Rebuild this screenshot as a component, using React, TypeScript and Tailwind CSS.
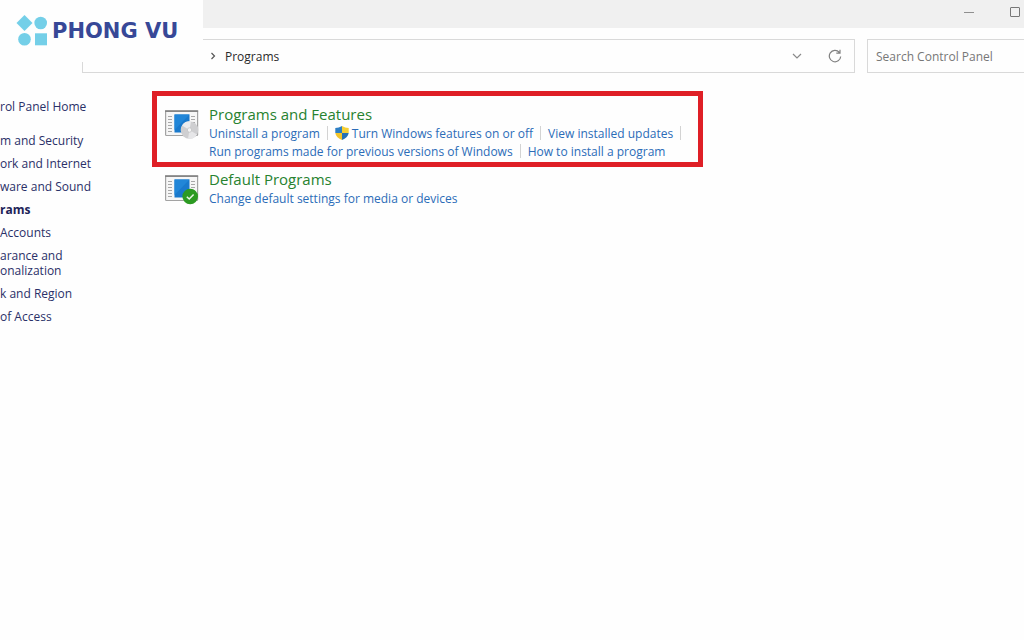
import React from 'react';

interface NavItem {
  label: string;
  active?: boolean;
}

const NAV_ITEMS: NavItem[] = [
  { label: 'm and Security' },
  { label: 'ork and Internet' },
  { label: 'ware and Sound' },
  { label: 'rams', active: true },
  { label: 'Accounts' },
  { label: 'arance and onalization' },
  { label: 'k and Region' },
  { label: 'of Access' },
];

const Logo: React.FC = () => (
  <div className="absolute left-0 top-0 z-10 flex h-[62px] w-[203px] items-center gap-1 bg-[#fefefe] pl-4">
    <svg viewBox="0 0 32 32" className="h-8 w-8 shrink-0" fill="#74cfe8">
      <path d="M8.500 0L16.500 8L8.500 16L.5 8Z" />
      <circle cx="24.700" cy="8" r="6.300" />
      <circle cx="8.500" cy="24.200" r="6.300" />
      <rect x="19" y="18.300" width="12" height="12" />
    </svg>
    <span className="whitespace-nowrap font-['DejaVu_Sans'] text-[21px] font-bold leading-none text-[#374897]">
      PHONG VU
    </span>
  </div>
);

const WindowIcon: React.FC<{ children: React.ReactNode }> = ({ children }) => (
  <svg viewBox="0 0 34 30" className="h-[30px] w-[34px] shrink-0">
    <rect x="0.600" y="1" width="32" height="24.500" rx="0.800" fill="#f6f6f6" stroke="#a3a3a3" strokeWidth="1.200" />
    <path d="M0 1.200H33.200" stroke="#858585" strokeWidth="1.800" />
    <path d="M3 6.500h4M3 9.500h4M3 12.500h4M3 15.500h4M3 18.500h4M3 21.500h4M26 6.500h4M26 9.500h4M26 12.500h4M26 15.500h4M26 18.500h4M26 21.500h4" stroke="#a8a8a8" strokeWidth="1.200" />
    <rect x="9.500" y="4.500" width="15" height="18" fill="#1979cc" />
    <path d="M9.500 4.500H24.500L9.500 20Z" fill="#2186d8" />
    {children}
  </svg>
);

const DiscBadge: React.FC = () => (
  <>
    <circle cx="24.500" cy="20" r="8.800" fill="#cfcfd1" />
    <path d="M24.500 20L17 15.400A8.800 8.800 0 0 1 26 11.300Z" fill="#ececee" />
    <path d="M24.500 20L32 24.600A8.800 8.800 0 0 1 23 28.700Z" fill="#e6e6e8" />
    <circle cx="24.500" cy="20" r="2.200" fill="#f4f4f4" stroke="#b9b9bb" strokeWidth="0.600" />
  </>
);

const CheckBadge: React.FC = () => (
  <>
    <circle cx="25.200" cy="21.500" r="7.800" fill="#2c9a22" />
    <path d="M21.800 21.800L24.200 24L28.600 19.400" fill="none" stroke="#e9f7e4" strokeWidth="1.500" />
  </>
);

const ShieldIcon: React.FC = () => (
  <svg viewBox="0 0 14 14" className="h-[14px] w-[14px] shrink-0">
    <path d="M7 0C5 1.300 2.700 1.900.3 2V7H7Z" fill="#2e7fc4" />
    <path d="M7 0C9 1.300 11.300 1.900 13.700 2V7H7Z" fill="#f6cf33" />
    <path d="M.3 7C.8 10.200 3.400 12.500 7 14V7Z" fill="#f2c42a" />
    <path d="M13.700 7C13.200 10.200 10.600 12.500 7 14V7Z" fill="#2671b5" />
  </svg>
);

const Divider: React.FC = () => <span className="mx-[7px] h-[14px] w-px bg-[#d3d3d3]" />;

const TaskLink: React.FC<{ children: React.ReactNode }> = ({ children }) => (
  <a href="#" className="flex items-center gap-[3px] whitespace-nowrap text-[#2b6cb8] hover:underline">
    {children}
  </a>
);

interface CategoryProps {
  title: string;
  badge: React.ReactNode;
  highlighted?: boolean;
  children: React.ReactNode;
}

const Category: React.FC<CategoryProps> = ({ title, badge, highlighted, children }) => (
  <section
    className={`flex max-w-[551px] gap-[10px] border-x-[5px] px-2 ${
      highlighted ? 'border-y-[5px] border-[#df1f26] pb-0.5 pt-2' : 'border-transparent pt-0.5'
    }`}
  >
    <div className="pt-1.5">
      <WindowIcon>{badge}</WindowIcon>
    </div>
    <div>
      <h2 className="text-[15px] leading-5 text-[#27822f]">
        <a href="#">{title}</a>
      </h2>
      {children}
    </div>
  </section>
);

const App: React.FC = () => {
  return (
    <div className="relative min-h-screen bg-[#fefefe] font-['Open_Sans',sans-serif] text-xs leading-[15px] text-[#333]">
      <Logo />

      {/* Title bar */}
      <header className="flex h-7 justify-end gap-9 bg-[#f0f0f0] pr-1">
        <button aria-label="Minimize" className="h-6 w-[10px]">
          <svg viewBox="0 0 10 10" className="h-[10px] w-[10px]" stroke="#8f8f8f">
            <path d="M0 5.500H10" />
          </svg>
        </button>
        <button aria-label="Maximize" className="h-6 w-[10px]">
          <svg viewBox="0 0 10 10" className="h-[10px] w-[10px]" fill="none" stroke="#777">
            <rect x="0.500" y="0.500" width="9" height="9" rx="0.500" />
          </svg>
        </button>
      </header>

      {/* Address bar and search */}
      <div className="mt-[11px] flex gap-3 pl-[82px]">
        <div className="flex h-[34px] flex-1 items-center border border-[#d9d9d9] pl-[126px] pr-3">
          <svg viewBox="0 0 8 8" className="h-2 w-2" fill="none" stroke="#555" strokeWidth="1.200">
            <path d="M2.500 1L5.500 4L2.500 7" />
          </svg>
          <span className="ml-2 text-[#2b2b2b]">Programs</span>
          <button aria-label="Previous locations" className="ml-auto">
            <svg viewBox="0 0 10 10" className="h-[10px] w-[10px]" fill="none" stroke="#8a8a8a" strokeWidth="1.200">
              <path d="M1 3L5 7L9 3" />
            </svg>
          </button>
          <button aria-label="Refresh" className="ml-[26px]">
            <svg viewBox="0 0 14 14" className="h-[14px] w-[14px]" fill="none" stroke="#808080" strokeWidth="1.200">
              <path d="M11.300 3.300A5.700 5.700 0 1 0 12.700 7.500M8.300 4.200H12V.8" />
            </svg>
          </button>
        </div>
        <input
          type="search"
          aria-label="Search Control Panel"
          placeholder="Search Control Panel"
          className="h-[34px] w-[157px] border border-r-0 border-[#d9d9d9] bg-transparent px-2 outline-none placeholder:text-[#777]"
        />
      </div>

      <div className="flex pt-[18px]">
        {/* Sidebar */}
        <nav className="w-[152px] shrink-0 pt-2 text-[#2a3068]">
          <a href="#" className="block">
            rol Panel Home
          </a>
          <ul className="mt-[19px] flex w-24 flex-col gap-2">
            {NAV_ITEMS.map((item) => (
              <li key={item.label}>
                <a href="#" className={item.active ? 'font-bold text-[#1c2358]' : ''}>
                  {item.label}
                </a>
              </li>
            ))}
          </ul>
        </nav>

        <main className="min-w-0 flex-1">
          <Category title="Programs and Features" badge={<DiscBadge />} highlighted>
            <div className="flex h-[18px] items-center">
              <TaskLink>Uninstall a program</TaskLink>
              <Divider />
              <TaskLink>
                <ShieldIcon />
                Turn Windows features on or off
              </TaskLink>
              <Divider />
              <TaskLink>View installed updates</TaskLink>
              <Divider />
            </div>
            <div className="flex h-[18px] items-center">
              <TaskLink>Run programs made for previous versions of Windows</TaskLink>
              <Divider />
              <TaskLink>How to install a program</TaskLink>
            </div>
          </Category>
          <Category title="Default Programs" badge={<CheckBadge />}>
            <div className="flex h-[18px] items-center">
              <TaskLink>Change default settings for media or devices</TaskLink>
            </div>
          </Category>
        </main>
      </div>
    </div>
  );
};

export default App;
